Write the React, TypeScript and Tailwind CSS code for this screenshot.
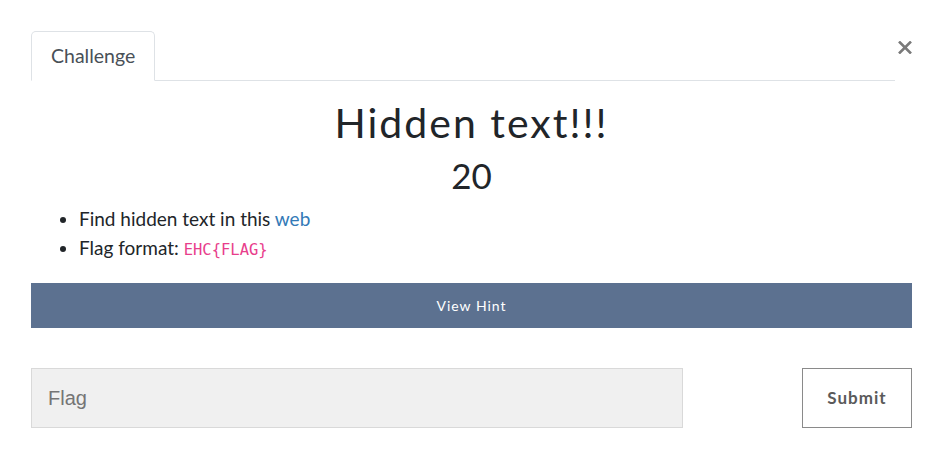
import React from 'react';

const ChallengeModal = () => {
  return (
    <div className="w-[940px] h-[474px] bg-white pl-[31px] pr-[28px] pt-[31px] font-['Lato',sans-serif] text-[#212529]">
      {/* Tabs + close */}
      <div className="flex items-start">
        <div className="flex-1 flex border-b border-[#dee2e6] mr-[2px]">
          <div className="-mb-px px-[19px] h-[50px] flex items-center rounded-t-[5px] border border-[#dee2e6] border-b-white bg-white text-[19.5px] text-[#495057]">
            Challenge
          </div>
        </div>
        <button className="mt-[9px] w-[15px] h-[14px] flex items-center justify-center text-[#7a7a7a]">
          <svg width="14" height="13" viewBox="0 0 14 13">
            <path d="M1 0.5 L13 12.5 M13 0.5 L1 12.5" stroke="currentColor" strokeWidth="2.6" />
          </svg>
        </button>
      </div>

      {/* Title */}
      <div className="text-center mt-[17px]">
        <h2 className="text-[41px] leading-[50px] tracking-[2px] font-normal">Hidden text!!!</h2>
        <h3 className="text-[35px] leading-[42px] mt-[6px] font-normal">20</h3>
      </div>

      {/* Description */}
      <ul className="list-disc pl-[48px] mt-[8px] text-[19px] leading-[29px]">
        <li>
          Find hidden text in this <a className="text-[#337ab7]">web</a>
        </li>
        <li>
          Flag format:{' '}
          <code className="text-[#e83e8c] text-[15.5px] font-['DejaVu_Sans_Mono',monospace]">EHC{'{'}FLAG{'}'}</code>
        </li>
      </ul>

      {/* Hint */}
      <button className="mt-[18px] w-[881px] h-[45px] bg-[#5c7190] text-white text-[14px] tracking-[1px] flex items-center justify-center">
        View Hint
      </button>

      {/* Submit row */}
      <div className="mt-[40px] w-[881px] flex justify-between">
        <div className="w-[652px] h-[60px] bg-[#f0f0f0] border border-[#d9d9d9] flex items-center px-[16px] text-[20px] text-[#757575] font-['Liberation_Sans',sans-serif]">
          Flag
        </div>
        <button className="w-[110px] h-[60px] border border-[#8a8a8a] bg-white text-[#5a5a5a] text-[17px] font-bold tracking-[1px]">
          Submit
        </button>
      </div>
    </div>
  );
};

export default function App() {
  return <ChallengeModal />;
}
